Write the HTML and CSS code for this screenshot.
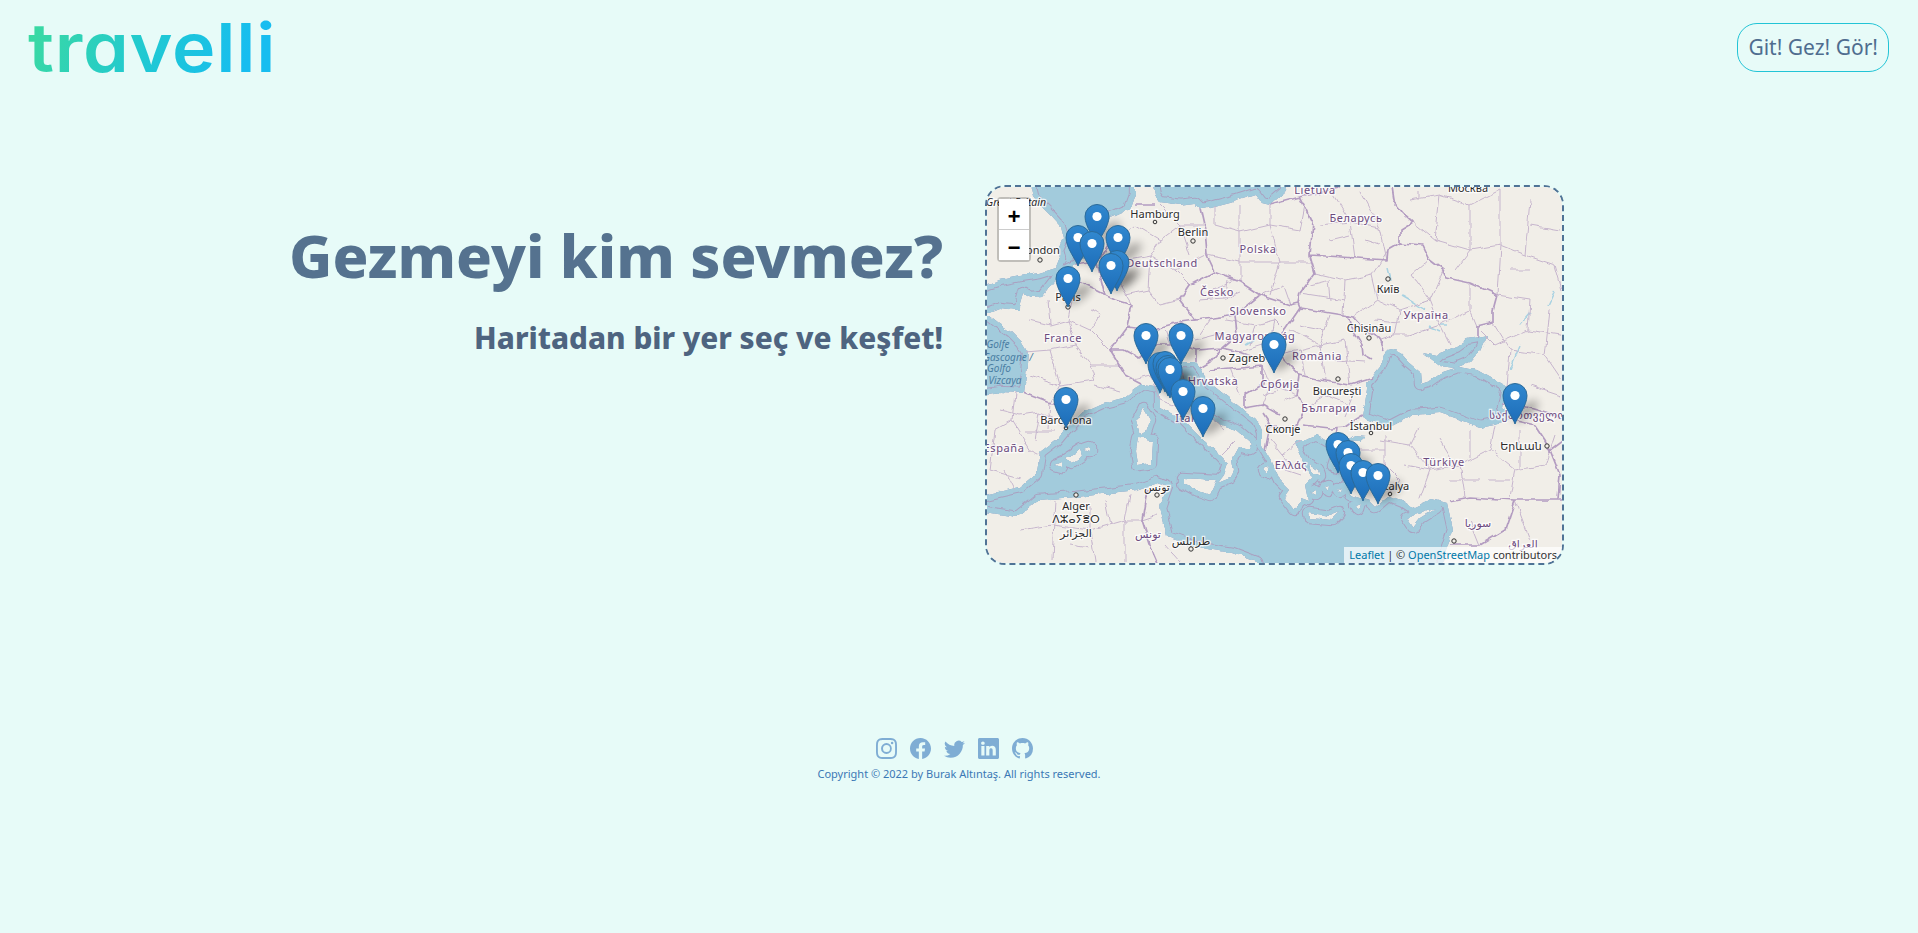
FILE: index.html
```html
<!DOCTYPE html>
<html lang="tr">
<head>
    <meta charset="UTF-8">
    <meta name="viewport" content="width=device-width, initial-scale=1.0">
    <title>travelli</title>
    <link rel="stylesheet" href="styles.css">
</head>
<body>

    <!-- Top bar -->
    <header class="topbar">
        <a class="logo" href="#">travelli</a>
        <a class="go-button" href="#">Git! Gez! Gör!</a>
    </header>

    <!-- Headline and map -->
    <main class="hero">
        <div class="hero-text">
            <h1>Gezmeyi kim sevmez?</h1>
            <h2>Haritadan bir yer seç ve keşfet!</h2>
        </div>

        <div class="map">
            <svg class="map-tiles" viewBox="987 187 575 376" width="575" height="376" role="img" aria-label="Avrupa haritası">
                <defs>
                    <path id="sea" fill-rule="evenodd" clip-rule="evenodd" d="
                        M1027 170 L1033 196 1040 205 1050 215 1060 226 1063 238 1058 250 1060 258 1056 268 1040 273 1020 276 1000 280 975 288 975 312 990 312 1000 308 1018 310 1023 293 1030 297 1043 296 1052 284 1062 272 1075 265 1089 254 1096 237 1110 218 1130 209 1135 195 1135 170 Z
                        M1150 170 L1155 195 1160 202 1180 205 1195 203 1200 208 1203 209 1230 202 1255 194 1262 203 1270 205 1285 192 1292 170 Z
                        M975 316 L990 316 1000 324 1012 332 1022 342 1028 352 1026 375 1024 393 1000 392 975 396 Z
                        M975 495 L985 495 1020 487 1037 473 1040 453 1057 440 1067 428 1083 412 1103 403 1123 398 1142 384 1160 387 1160 407 1183 420 1200 437 1222 457 1228 463 1224 475 1218 483 1230 478 1234 470 1232 458 1238 447 1250 450 1252 443 1237 430 1217 423 1193 410 1183 393 1175 365 1181 362 1195 362 1200 368 1210 383 1240 407 1257 420 1262 432 1262 445 1272 462 1280 480 1290 490 1285 497 1295 510 1300 497 1308 500 1305 485 1312 478 1305 465 1298 450 1296 440 1305 440 1317 434 1337 446 1340 460 1346 473 1350 495 1369 501 1375 507 1388 496 1403 502 1412 508 1432 499 1447 503 1453 530 1443 560 1436 580 1262 580 1257 562 1233 553 1213 550 1190 545 1167 537 1160 507 1167 487 1157 483 1137 490 1077 497 1038 500 1017 517 985 512 975 512 Z
                        M1143 408 L1150 420 1146 432 1141 435 1137 420 Z
                        M1138 438 L1153 440 1152 463 1138 465 1136 450 Z
                        M1183 478 L1217 480 1210 495 1196 490 1183 483 Z
                        M1066 458 L1080 449 1082 456 1072 463 Z
                        M1084 449 L1090 447 1090 451 Z
                        M1055 465 L1062 462 1062 467 Z
                        M1309 513 L1330 516 1340 512 1332 520 1310 518 Z
                        M1407 518 L1436 508 1420 518 1413 527 Z
                        M1355 505 L1360 503 1358 510 Z
                        M1346 462 L1335 460 1333 466 1342 468 Z
                        M1310 465 L1318 470 1320 476 1312 472 Z
                        M1325 487 L1329 486 1328 491 Z
                        M1312 492 L1316 490 1316 494 Z
                        M1338 488 L1342 489 1340 492 Z
                        M1264 470 L1268 468 1268 474 Z
                        M1345 440 L1356 435 1366 436 1360 441 Z
                        M1367 383 L1380 367 1387 350 1395 348 1408 362 1423 353 1437 356 1440 353 1456 347 1467 339 1487 335 1480 350 1470 362 1458 367 1477 370 1507 387 1503 407 1513 420 1480 427 1440 413 1413 415 1390 427 1363 417 1367 390 Z
                        M1408 362 L1423 353 1440 366 1455 368 1443 372 1430 381 1421 384 1420 372 Z"/>
                    <clipPath id="sea-clip"><use href="#sea"/></clipPath>
                    <filter id="soft" x="-60%" y="-60%" width="220%" height="220%"><feGaussianBlur stdDeviation="4"/></filter>
                    <filter id="wiggle" filterUnits="userSpaceOnUse" x="975" y="170" width="600" height="410" color-interpolation-filters="sRGB">
                        <feTurbulence type="fractalNoise" baseFrequency="0.085" numOctaves="2" seed="4" result="noise"/>
                        <feDisplacementMap in="SourceGraphic" in2="noise" scale="6" xChannelSelector="R" yChannelSelector="G"/>
                        <feGaussianBlur stdDeviation="0.35"/>
                    </filter>
                    <linearGradient id="pin-fill" x1="0" y1="0" x2="0" y2="1">
                        <stop offset="0" stop-color="#3188cf"/>
                        <stop offset="1" stop-color="#1c6cb8"/>
                    </linearGradient>
                    <ellipse id="pin-shadow" cx="11" cy="-13" rx="15" ry="6" transform="rotate(-38 11 -13)" filter="url(#soft)" class="pin-shadow"/>
                    <g id="pin">
                        <path class="pin-body" d="M0 0C-2-6.500-12-18-12-28.500A12 12 0 1 1 12-28.500C12-18 2-6.500 0 0Z"/>
                        <circle class="pin-dot" cx="0" cy="-28.500" r="4.600"/>
                    </g>
                </defs>

                <rect class="land" x="987" y="187" width="575" height="376"/>

                <g filter="url(#wiggle)">
                    <!-- Water, with the sea border running along the coast -->
                    <use href="#sea" class="water"/>
                    <g clip-path="url(#sea-clip)">
                        <use href="#sea" class="sea-line"/>
                        <use href="#sea" class="sea-gap"/>
                    </g>

                    <path class="lakes" d="M1387 268L1390 280M1401 295L1413 302 1425 310M1440 325L1448 325M1520 325L1530 313M1555 290L1548 305M1178 360L1176 348M1254 339L1246 344M1428 327L1440 332M1510 370L1520 345"/>

                    <path class="regions" d="
                        M1000 410L1020 415 1040 412 1060 420M1015 393L1012 420 995 430M1040 412L1035 440M1012 420L1030 450 1040 455M995 430L990 470 1020 478M1050 402L1048 430M990 445L1012 450M1025 432L1055 432M1005 470L1015 490
                        M1030 320L1050 325 1068 320 1090 330 1100 315M1025 352L1050 350 1075 345 1090 365 1120 365M1075 345L1068 320M1060 385L1050 350M1060 385L1095 380 1090 365M1060 385L1050 402M1090 330L1110 350M1048 300L1050 325M1075 285L1068 320M1095 385L1120 392M1030 375L1060 385M1090 310L1100 315
                        M1105 255L1125 260 1150 255 1175 270 1190 285M1125 260L1120 285 1132 305M1150 255L1148 290 1160 305 1180 300M1160 240L1150 255M1175 270L1205 255M1180 225L1190 255M1135 225L1160 240 1180 225 1205 225M1118 240L1135 225M1105 272L1125 272M1160 205L1180 225M1148 290L1125 295
                        M1215 225L1240 232 1270 225 1300 230M1240 232L1240 282M1270 225L1280 262 1312 262M1240 262L1280 262M1280 262L1270 295M1290 305L1283 285 1260 295M1207 255L1240 262M1215 205L1215 225M1240 205L1240 232M1270 205L1270 225M1210 290L1235 280M1225 298L1228 280M1300 230L1305 205
                        M1200 300L1225 298 1240 292M1180 320L1195 340 1222 333M1160 360L1175 375 1150 375 1130 380M1160 362L1185 375M1150 375L1160 400M1175 375L1190 395 1205 412M1160 400L1185 410M1205 412L1190 395M1225 430L1205 412M1235 442L1222 455M1170 345L1165 330M1200 335L1210 320
                        M1225 320L1255 325 1275 320 1285 330M1255 325L1250 345M1275 320L1270 345M1240 352L1262 345M1275 355L1300 350 1320 345 1345 340M1300 350L1305 375M1320 345L1325 380M1345 340L1350 385M1290 330L1320 345M1330 315L1320 345M1300 325L1325 330M1335 360L1365 362M1278 390L1262 395M1325 395L1350 405M1355 390L1345 415M1310 405L1325 395M1285 400L1297 395
                        M1320 225L1350 222 1380 228M1350 222L1355 258M1330 190L1350 222M1380 228L1387 260M1360 190L1380 228M1315 273L1345 280 1372 275 1388 250M1345 280L1343 315M1372 275L1378 300 1400 310M1300 293L1345 300M1378 300L1353 317M1400 310L1430 300 1443 270M1400 310L1395 335 1380 340M1430 300L1440 325 1470 310 1470 283M1440 325L1410 335 1395 335M1470 310L1477 327M1330 240L1350 235M1365 240L1380 245M1412 275L1430 260M1412 275L1430 300M1330 300L1328 280M1310 285L1330 280M1375 320L1400 322M1450 345L1440 325
                        M1410 200L1440 195 1470 205 1500 190M1440 195L1435 240 1470 250 1500 245 1525 255M1413 222L1435 240M1470 205L1470 250M1500 190L1500 245M1525 255L1530 200M1525 255L1555 265 1562 290M1500 245L1497 295M1497 295L1530 300 1528 330 1495 345M1528 330L1560 335M1493 323L1510 350 1545 355M1545 355L1550 310M1510 350L1507 387M1545 355L1562 380M1530 225L1560 230M1455 270L1470 250M1420 200L1420 190M1510 270L1530 270M1480 330L1495 345M1530 385L1560 395
                        M1380 440L1410 445 1430 470 1460 465 1490 450M1350 470L1385 465 1400 480 1390 495M1410 445L1420 425M1430 470L1420 498M1460 465L1465 497M1490 450L1495 425M1490 450L1515 470 1545 465M1515 470L1510 497M1385 465L1385 435M1545 465L1555 435M1480 545L1470 520M1515 500L1530 540M1360 450L1385 450M1405 465L1430 470M1440 440L1455 465M1470 430L1470 458M1520 430L1520 470M1365 480L1385 480M1450 480L1480 480M1490 480L1510 480
                        M1052 525L1090 530 1125 520 1142 520M1090 530L1095 562M1055 500L1052 560M1125 520L1125 562M1090 505L1090 530M1157 515L1142 520M1165 545L1180 562M1020 530L1052 525M1105 500L1110 525M1130 495L1125 520M1070 545L1090 548
                        M1262 365L1270 385 1297 395M1230 368L1240 395M1270 385L1262 405M1300 440L1282 455 1296 470M1282 455L1270 440M1285 470L1300 475"/>

                    <path class="borders" d="
                        M1062 272L1075 280 1095 290 1105 295 1115 300 1132 305 1127 327 1110 350 1125 375 1142 384
                        M1105 295L1100 275 1097 262 1105 250 1115 232M1097 262L1075 265
                        M1135 205L1155 205M1200 208L1205 230 1207 255 1215 272 1190 285 1180 300 1195 320 1180 322 1150 330 1127 327
                        M1150 330L1155 345 1140 358 1125 350 1110 350M1155 345L1180 345 1197 350 1197 362M1195 320L1215 318 1235 315 1237 335 1222 348 1197 350
                        M1222 348L1210 362 1200 368M1215 272L1240 282 1260 295 1235 315M1260 295L1290 305 1298 303M1270 205L1300 197 1308 213 1313 223 1310 255 1315 273 1300 293 1298 303
                        M1300 197L1340 188M1310 255L1357 258 1387 260 1388 250 1400 243 1423 245 1430 260 1443 270 1447 278 1470 283 1497 295 1493 310 1493 323 1477 327 1477 338
                        M1400 243L1400 230 1413 222 1403 213 1393 200 1390 180
                        M1298 303L1300 308 1343 315 1353 317 1362 327 1378 337 1383 350M1345 315L1362 345 1363 355 1372 360
                        M1300 308L1285 330 1270 345 1290 365 1300 375 1320 380 1350 385 1373 378M1300 375L1297 395 1303 410 1295 428 1265 425M1303 425L1330 428 1345 427 1355 420 1363 415M1337 428L1335 445
                        M1222 348L1240 352 1262 360 1270 345M1208 370L1230 368 1262 365 1262 385 1245 395 1245 408M1245 408L1262 405 1280 415M1262 413L1270 425 1265 450
                        M1024 393L1047 402 1066 405 1075 410M1147 490L1142 520 1150 545 1165 580
                        M1450 501L1470 497 1515 500 1570 500M1513 420L1535 425 1545 440 1550 450 1560 475 1558 500M1503 403L1520 405 1570 420M1515 500L1505 530 1480 545 1450 545M1550 450L1570 435"/>
                </g>

                <!-- Place names -->
                <text class="city island" x="1016" y="206">Great Britain</text>
                <text class="city" x="1155" y="218">Hamburg</text>
                <text class="city" x="1193" y="236">Berlin</text>
                <text class="city" x="1040" y="254">London</text>
                <text class="city" x="1068" y="301">Paris</text>
                <text class="city" x="1247" y="362">Zagreb</text>
                <text class="city" x="1388" y="293">Київ</text>
                <text class="city" x="1369" y="332">Chișinău</text>
                <text class="city" x="1468" y="192">Москва</text>
                <text class="city" x="1337" y="395">București</text>
                <text class="city" x="1283" y="433">Скопје</text>
                <text class="city" x="1371" y="430">İstanbul</text>
                <text class="city" x="1390" y="490">Antalya</text>
                <text class="city" x="1521" y="450">Երևան</text>
                <text class="city" x="1066" y="424">Barcelona</text>
                <text class="city" x="1076" y="510">Alger</text>
                <text class="city" x="1076" y="523">ⴷⵣⴰⵢⴻⵔ</text>
                <text class="city" x="1076" y="537">الجزائر</text>
                <text class="city" x="1157" y="491">تونس</text>
                <text class="city" x="1191" y="545">طرابلس</text>

                <text class="country" x="1258" y="253">Polska</text>
                <text class="country" x="1162" y="267">Deutschland</text>
                <text class="country" x="1217" y="296">Česko</text>
                <text class="country" x="1258" y="315">Slovensko</text>
                <text class="country" x="1255" y="340">Magyarország</text>
                <text class="country" x="1213" y="385">Hrvatska</text>
                <text class="country" x="1280" y="388">Србија</text>
                <text class="country" x="1063" y="342">France</text>
                <text class="country" x="1315" y="194">Lietuva</text>
                <text class="country" x="1356" y="222">Беларусь</text>
                <text class="country" x="1426" y="319">Україна</text>
                <text class="country" x="1317" y="360">România</text>
                <text class="country" x="1329" y="412">България</text>
                <text class="country" x="1291" y="469">Ελλάς</text>
                <text class="country" x="1444" y="466">Türkiye</text>
                <text class="country" x="1528" y="419">საქართველო</text>
                <text class="country" x="1478" y="527">سوريا</text>
                <text class="country" x="1523" y="548">العراق</text>
                <text class="country" x="1004" y="452">España</text>
                <text class="country" x="1190" y="422">Italia</text>
                <text class="country" x="1148" y="538">تونس</text>

                <text class="sea-name" x="998" y="348">Golfe</text>
                <text class="sea-name" x="1008" y="361">Gascogne /</text>
                <text class="sea-name" x="999" y="372">Golfo</text>
                <text class="sea-name" x="1005" y="384">Vizcaya</text>

                <circle class="city-dot" cx="1155" cy="222" r="1.800"/>
                <circle class="city-dot" cx="1193" cy="241" r="2.200"/>
                <circle class="city-dot" cx="1040" cy="260" r="2.200"/>
                <circle class="city-dot" cx="1068" cy="307" r="2.200"/>
                <circle class="city-dot" cx="1223" cy="358" r="2.200"/>
                <circle class="city-dot" cx="1388" cy="279" r="2.200"/>
                <circle class="city-dot" cx="1369" cy="338" r="2.200"/>
                <circle class="city-dot" cx="1338" cy="379" r="2.200"/>
                <circle class="city-dot" cx="1285" cy="419" r="2.200"/>
                <circle class="city-dot" cx="1371" cy="433" r="1.800"/>
                <circle class="city-dot" cx="1390" cy="494" r="1.800"/>
                <circle class="city-dot" cx="1547" cy="446" r="2.200"/>
                <circle class="city-dot" cx="1066" cy="428" r="1.800"/>
                <circle class="city-dot" cx="1076" cy="495" r="2.200"/>
                <circle class="city-dot" cx="1157" cy="495" r="2.200"/>
                <circle class="city-dot" cx="1191" cy="549" r="2.200"/>
                <circle class="city-dot" cx="1454" cy="541" r="2.200"/>

                <!-- Marker shadows, then markers, south on top -->
                <g>
                    <use href="#pin-shadow" x="1097" y="245"/><use href="#pin-shadow" x="1078" y="266"/><use href="#pin-shadow" x="1118" y="266"/><use href="#pin-shadow" x="1092" y="272"/>
                    <use href="#pin-shadow" x="1117" y="291"/><use href="#pin-shadow" x="1111" y="294"/><use href="#pin-shadow" x="1068" y="307"/><use href="#pin-shadow" x="1146" y="364"/>
                    <use href="#pin-shadow" x="1181" y="364"/><use href="#pin-shadow" x="1274" y="373"/><use href="#pin-shadow" x="1160" y="393"/><use href="#pin-shadow" x="1165" y="392"/>
                    <use href="#pin-shadow" x="1168" y="396"/><use href="#pin-shadow" x="1170" y="398"/><use href="#pin-shadow" x="1183" y="420"/><use href="#pin-shadow" x="1066" y="428"/>
                    <use href="#pin-shadow" x="1203" y="437"/><use href="#pin-shadow" x="1515" y="424"/><use href="#pin-shadow" x="1338" y="473"/><use href="#pin-shadow" x="1348" y="481"/>
                    <use href="#pin-shadow" x="1351" y="494"/><use href="#pin-shadow" x="1363" y="501"/><use href="#pin-shadow" x="1378" y="504"/>
                </g>
                <g>
                    <use href="#pin" x="1097" y="245"/><use href="#pin" x="1078" y="266"/><use href="#pin" x="1118" y="266"/><use href="#pin" x="1092" y="272"/>
                    <use href="#pin" x="1117" y="291"/><use href="#pin" x="1111" y="294"/><use href="#pin" x="1068" y="307"/><use href="#pin" x="1146" y="364"/>
                    <use href="#pin" x="1181" y="364"/><use href="#pin" x="1274" y="373"/><use href="#pin" x="1160" y="393"/><use href="#pin" x="1165" y="392"/>
                    <use href="#pin" x="1168" y="396"/><use href="#pin" x="1170" y="398"/><use href="#pin" x="1183" y="420"/><use href="#pin" x="1066" y="428"/>
                    <use href="#pin" x="1203" y="437"/><use href="#pin" x="1515" y="424"/><use href="#pin" x="1338" y="473"/><use href="#pin" x="1348" y="481"/>
                    <use href="#pin" x="1351" y="494"/><use href="#pin" x="1363" y="501"/><use href="#pin" x="1378" y="504"/>
                </g>
            </svg>

            <div class="zoom-control">
                <a href="#">+</a>
                <a href="#">−</a>
            </div>
            <div class="attribution">
                <a href="#">Leaflet</a> | © <a href="#">OpenStreetMap</a> contributors
            </div>
        </div>
    </main>

    <!-- Social links -->
    <footer class="footer">
        <div class="social">
            <a href="#" aria-label="Instagram"><svg viewBox="0 0 16 16"><path d="M8 0C5.829 0 5.556.01 4.703.048 3.85.088 3.269.222 2.76.42a3.917 3.917 0 0 0-1.417.923A3.927 3.927 0 0 0 .42 2.76C.222 3.268.087 3.85.048 4.7.01 5.555 0 5.827 0 8.001c0 2.172.01 2.444.048 3.297.04.852.174 1.433.372 1.942.205.526.478.972.923 1.417.444.445.89.719 1.416.923.51.198 1.09.333 1.942.372C5.555 15.99 5.827 16 8 16s2.444-.01 3.298-.048c.851-.04 1.434-.174 1.943-.372a3.916 3.916 0 0 0 1.416-.923c.445-.445.718-.891.923-1.417.197-.509.332-1.09.372-1.942C15.99 10.445 16 10.173 16 8s-.01-2.445-.048-3.299c-.04-.851-.175-1.433-.372-1.941a3.926 3.926 0 0 0-.923-1.417A3.911 3.911 0 0 0 13.24.42c-.51-.198-1.092-.333-1.943-.372C10.443.01 10.172 0 7.998 0h.003zm-.717 1.442h.718c2.136 0 2.389.007 3.232.046.78.035 1.204.166 1.486.275.373.145.64.319.92.599.28.28.453.546.598.92.11.281.24.705.275 1.485.039.843.047 1.096.047 3.231s-.008 2.389-.047 3.232c-.035.78-.166 1.203-.275 1.485a2.47 2.47 0 0 1-.599.919c-.28.28-.546.453-.92.598-.28.11-.704.24-1.485.276-.843.038-1.096.047-3.232.047s-2.39-.009-3.233-.047c-.78-.036-1.203-.166-1.485-.276a2.478 2.478 0 0 1-.92-.598 2.48 2.48 0 0 1-.6-.92c-.109-.281-.24-.705-.275-1.485-.038-.843-.046-1.096-.046-3.233 0-2.136.008-2.388.046-3.231.036-.78.166-1.204.276-1.486.145-.373.319-.64.599-.92.28-.28.546-.453.92-.598.282-.11.705-.24 1.485-.276.738-.034 1.024-.044 2.515-.045v.002zm4.988 1.328a.96.96 0 1 0 0 1.92.96.96 0 0 0 0-1.92zm-4.27 1.122a4.109 4.109 0 1 0 0 8.217 4.109 4.109 0 0 0 0-8.217zm0 1.441a2.667 2.667 0 1 1 0 5.334 2.667 2.667 0 0 1 0-5.334z"/></svg></a>
            <a href="#" aria-label="Facebook"><svg viewBox="0 0 16 16"><path d="M16 8.049c0-4.446-3.582-8.05-8-8.05C3.58 0-.002 3.603-.002 8.05c0 4.017 2.926 7.347 6.75 7.951v-5.625h-2.03V8.05H6.75V6.275c0-2.017 1.195-3.131 3.022-3.131.876 0 1.791.157 1.791.157v1.98h-1.009c-.993 0-1.303.621-1.303 1.258v1.51h2.218l-.354 2.326H9.25V16c3.824-.604 6.75-3.934 6.75-7.951z"/></svg></a>
            <a href="#" aria-label="Twitter"><svg viewBox="0 0 16 16"><path d="M5.026 15c6.038 0 9.341-5.003 9.341-9.334 0-.14 0-.282-.006-.422A6.685 6.685 0 0 0 16 3.542a6.658 6.658 0 0 1-1.889.518 3.301 3.301 0 0 0 1.447-1.817 6.533 6.533 0 0 1-2.087.793A3.286 3.286 0 0 0 7.875 6.03a9.325 9.325 0 0 1-6.767-3.429 3.289 3.289 0 0 0 1.018 4.382A3.323 3.323 0 0 1 .64 6.575v.045a3.288 3.288 0 0 0 2.632 3.218 3.203 3.203 0 0 1-.865.115 3.23 3.23 0 0 1-.614-.057 3.283 3.283 0 0 0 3.067 2.277A6.588 6.588 0 0 1 .78 13.58a6.32 6.32 0 0 1-.78-.045A9.344 9.344 0 0 0 5.026 15z"/></svg></a>
            <a href="#" aria-label="LinkedIn"><svg viewBox="0 0 16 16"><path d="M0 1.146C0 .513.526 0 1.175 0h13.65C15.474 0 16 .513 16 1.146v13.708c0 .633-.526 1.146-1.175 1.146H1.175C.526 16 0 15.487 0 14.854V1.146zm4.943 12.248V6.169H2.542v7.225h2.401zm-1.2-8.212c.837 0 1.358-.554 1.358-1.248-.015-.709-.52-1.248-1.342-1.248-.822 0-1.359.54-1.359 1.248 0 .694.521 1.248 1.327 1.248h.016zm4.908 8.212V9.359c0-.216.016-.432.08-.586.173-.431.568-.878 1.232-.878.869 0 1.216.662 1.216 1.634v3.865h2.401V9.25c0-2.22-1.184-3.252-2.764-3.252-1.274 0-1.845.7-2.165 1.193v.025h-.016a5.54 5.54 0 0 1 .016-.025V6.169h-2.4c.03.678 0 7.225 0 7.225h2.4z"/></svg></a>
            <a href="#" aria-label="GitHub"><svg viewBox="0 0 16 16"><path d="M8 0C3.58 0 0 3.58 0 8c0 3.54 2.29 6.53 5.47 7.59.4.07.55-.17.55-.38 0-.19-.01-.82-.01-1.49-2.01.37-2.53-.49-2.69-.94-.09-.23-.48-.94-.82-1.13-.28-.15-.68-.52-.01-.53.63-.01 1.08.58 1.23.82.72 1.21 1.87.87 2.33.66.07-.52.28-.87.51-1.07-1.78-.2-3.64-.89-3.64-3.95 0-.87.31-1.59.82-2.15-.08-.2-.36-1.02.08-2.12 0 0 .67-.21 2.2.82.64-.18 1.32-.27 2-.27.68 0 1.36.09 2 .27 1.53-1.04 2.2-.82 2.2-.82.44 1.1.16 1.92.08 2.12.51.56.82 1.27.82 2.15 0 3.07-1.87 3.75-3.65 3.95.29.25.54.73.54 1.48 0 1.07-.01 1.93-.01 2.2 0 .21.15.46.55.38A8.012 8.012 0 0 0 16 8c0-4.42-3.58-8-8-8z"/></svg></a>
        </div>
        <p class="copyright">Copyright © 2022 by Burak Altıntaş. All rights reserved.</p>
    </footer>

</body>
</html>
```

FILE: styles.css
```css
/* Page */
* {
    box-sizing: border-box;
}
body {
    margin: 0;
    min-height: 933px;
    background-color: #e7fbf8;
    font-family: "Noto Sans", "DejaVu Sans", sans-serif;
}
a {
    text-decoration: none;
}

/* Top bar */
.topbar {
    display: flex;
    justify-content: space-between;
    align-items: center;
    height: 94px;
    padding: 0 29px 0 28px;
}
.logo {
    font-family: "Inter", sans-serif;
    font-feature-settings: "cv11";
    font-size: 68px;
    font-weight: 600;
    line-height: 90px;
    letter-spacing: 0.7px;
    transform: scaleX(1.08);
    transform-origin: left center;
    background: linear-gradient(110deg, #3edb9c 0%, #1fc8d4 50%, #17bdf0 85%);
    -webkit-background-clip: text;
    background-clip: text;
    color: transparent;
}
.go-button {
    padding: 8px 10px;
    border: 1px solid #22c4d6;
    border-radius: 20px;
    font-size: 21px;
    line-height: 31px;
    color: #4f6d8f;
}

/* Headline and map */
.hero {
    display: flex;
    gap: 42px;
    margin-top: 91px;
}
.hero-text {
    flex: 0 0 943px;
    padding-top: 29px;
    text-align: right;
}
.hero-text h1 {
    margin: 0;
    font-size: 59.4px;
    font-weight: 800;
    line-height: 82px;
    color: #55728f;
}
.hero-text h2 {
    margin: 21px 0 0;
    font-size: 29.7px;
    font-weight: 800;
    line-height: 42px;
    color: #4e6480;
}
.map {
    position: relative;
    flex: 0 0 579px;
    height: 380px;
    border: 2px dashed #4f7396;
    border-radius: 20px;
    overflow: hidden;
}
.map-tiles {
    display: block;
}

/* Map drawing */
.land {
    fill: #f1eee8;
}
.water {
    fill: #a2cbdc;
}
.sea-line {
    fill: none;
    stroke: #aaa0c0;
    stroke-width: 12.4;
    stroke-linejoin: round;
}
.sea-gap {
    fill: none;
    stroke: #a2cbdc;
    stroke-width: 10.4;
    stroke-linejoin: round;
}
.lakes {
    fill: none;
    stroke: #a9d2e2;
    stroke-width: 1.5;
}
.regions {
    fill: none;
    stroke: #c6b5cd;
    stroke-width: 1;
}
.borders {
    fill: none;
    stroke: #b39cc1;
    stroke-width: 1.7;
    stroke-linejoin: round;
}
.city,
.country,
.sea-name {
    font-family: "Noto Sans", "DejaVu Sans", sans-serif;
    text-anchor: middle;
    paint-order: stroke;
    stroke: rgba(255, 255, 255, 0.75);
    stroke-width: 2.5px;
}
.city {
    font-size: 11px;
    fill: #2b2b2b;
}
.island {
    font-size: 10.5px;
    font-style: italic;
}
.country {
    font-size: 11px;
    letter-spacing: 0.6px;
    fill: #6b4a7e;
}
.sea-name {
    font-size: 10px;
    font-style: italic;
    fill: #4a7ea3;
    stroke: none;
}
.city-dot {
    fill: #f1eee8;
    stroke: #333;
    stroke-width: 1;
}
.pin-shadow {
    fill: #000;
    opacity: 0.3;
}
.pin-body {
    fill: url(#pin-fill);
    stroke: #2a6a99;
    stroke-width: 1;
}
.pin-dot {
    fill: #fff;
}

/* Leaflet controls */
.zoom-control {
    position: absolute;
    top: 10px;
    left: 10px;
    width: 34px;
    border: 2px solid rgba(0, 0, 0, 0.2);
    border-radius: 4px;
    background-clip: padding-box;
}
.zoom-control a {
    display: block;
    height: 30px;
    overflow: hidden;
    background-color: #fff;
    font-family: "Lucida Console", "Liberation Mono", monospace;
    font-size: 22px;
    font-weight: bold;
    line-height: 40px;
    text-align: center;
    color: #000;
}
.zoom-control a:first-child {
    border-bottom: 1px solid #ccc;
    height: 31px;
}
.attribution {
    position: absolute;
    right: 0;
    bottom: 0;
    padding: 0 5px;
    background-color: rgba(255, 255, 255, 0.7);
    font-size: 11px;
    line-height: 16px;
    color: #333;
}
.attribution a {
    color: #0078a8;
}

/* Footer */
.footer {
    margin-top: 173px;
    text-align: center;
}
.social {
    display: flex;
    justify-content: center;
    gap: 13px;
    padding-right: 9px;
}
.social a {
    display: block;
    width: 21px;
    height: 21px;
}
.social svg {
    display: block;
    width: 21px;
    height: 21px;
    fill: #7fadd4;
}
.copyright {
    margin: 7px 0 0;
    font-size: 11px;
    line-height: 16px;
    color: #3b78b5;
}
```
